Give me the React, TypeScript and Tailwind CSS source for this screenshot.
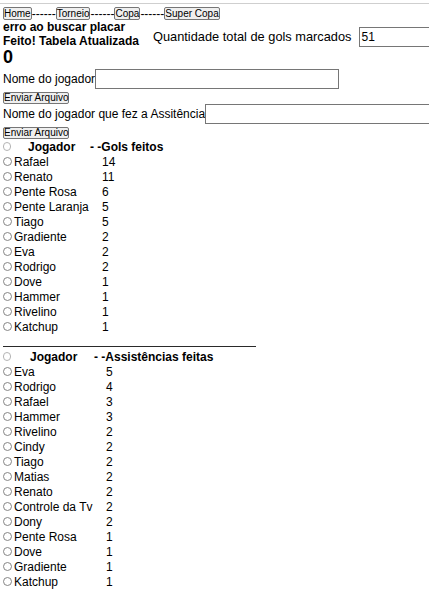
import React from 'react';

const golsFeitos: [string, number][] = [
  ['Rafael', 14],
  ['Renato', 11],
  ['Pente Rosa', 6],
  ['Pente Laranja', 5],
  ['Tiago', 5],
  ['Gradiente', 2],
  ['Eva', 2],
  ['Rodrigo', 2],
  ['Dove', 1],
  ['Hammer', 1],
  ['Rivelino', 1],
  ['Katchup', 1],
];

const assistencias: [string, number][] = [
  ['Eva', 5],
  ['Rodrigo', 4],
  ['Rafael', 3],
  ['Hammer', 3],
  ['Rivelino', 2],
  ['Cindy', 2],
  ['Tiago', 2],
  ['Matias', 2],
  ['Renato', 2],
  ['Controle da Tv', 2],
  ['Dony', 2],
  ['Pente Rosa', 1],
  ['Dove', 1],
  ['Gradiente', 1],
  ['Katchup', 1],
];

const Radio = ({ light }: { light?: boolean }) => (
  <span
    className={`block w-[9px] h-[9px] rounded-full border bg-white ${
      light ? 'border-[#b4b4b4]' : 'border-[#858585]'
    }`}
  />
);

const NavButton = ({ label }: { label: string }) => (
  <button className="h-[13px] px-0 text-[10px] leading-[11px] border border-[#767676] bg-[#efefef] rounded-[2px] text-black">
    {label}
  </button>
);

const SendButton = () => (
  <button className="block h-[12px] ml-[3px] px-0 text-[10px] leading-[10px] border border-[#767676] bg-[#efefef] rounded-[2px] text-black">
    Enviar Arquivo
  </button>
);

interface TableProps {
  title: string;
  rows: [string, number][];
  nameWidth: string;
  headerName: string;
}

const ScoreTable = ({ title, rows, nameWidth, headerName }: TableProps) => (
  <div>
    {/* header row */}
    <div className="flex items-center h-[15px] font-bold">
      <span className="pl-[3px] w-[11px] flex justify-start">
        <Radio light />
      </span>
      <span className={headerName}>Jogador</span>
      <span>- -{title}</span>
    </div>
    {rows.map(([name, n], i) => (
      <div key={i} className="flex items-center h-[15px]">
        <span className="pl-[3px] w-[14px]">
          <Radio />
        </span>
        <span className={nameWidth}>{name}</span>
        <span>{n}</span>
      </div>
    ))}
  </div>
);

export default function App() {
  return (
    <div className="w-full overflow-hidden bg-white text-black text-[12px] leading-[14px] font-['Liberation_Sans',Arial,sans-serif]">
      {/* top rule */}
      <div className="pt-[3px]">
        <div className="h-px bg-[#cfcfcf]" />
      </div>

      {/* nav */}
      <div className="mt-[3px] pl-[3px] flex items-center h-[13px]">
        <NavButton label="Home" />
        <span>------</span>
        <NavButton label="Torneio" />
        <span>------</span>
        <NavButton label="Copa" />
        <span>------</span>
        <NavButton label="Super Copa" />
      </div>

      {/* status + total */}
      <div className="flex items-start">
        <div className="w-[153px] shrink-0 pl-[3px] font-bold">
          <div>erro ao buscar placar</div>
          <div>Feito! Tabela Atualizada</div>
        </div>
        <div className="mt-[7px] flex items-center h-[20px] gap-[8px] shrink-0">
          <span className="text-[12.8px]">Quantidade total de gols marcados</span>
          <input
            readOnly
            value="51"
            className="w-[160px] h-[20px] border border-[#767676] px-[1px] text-[12px] outline-none"
          />
        </div>
      </div>

      <div className="pl-[3px] font-bold text-[18px] leading-[18px]">0</div>

      {/* gol form */}
      <div className="mt-[3px] pl-[3px] flex items-center">
        <span className="shrink-0">Nome do jogador</span>
        <input className="w-[244px] h-[20px] shrink-0 border border-[#767676] outline-none" />
      </div>
      <div className="mt-[3px]">
        <SendButton />
      </div>

      {/* assist form */}
      <div className="pl-[3px] flex items-center">
        <span className="shrink-0">Nome do jogador que fez a Assitência</span>
        <input className="w-[245px] h-[20px] shrink-0 border border-[#767676] outline-none" />
      </div>
      <div className="mt-[3px]">
        <SendButton />
      </div>

      <ScoreTable
        title="Gols feitos"
        rows={golsFeitos}
        nameWidth="w-[88px] shrink-0"
        headerName="ml-[17px] w-[62px] shrink-0"
      />

      <div className="mt-[12px] ml-[3px] w-[253px] h-px bg-[#2a2a2a]" />

      <div className="mt-[2px]">
        <ScoreTable
          title="Assistências feitas"
          rows={assistencias}
          nameWidth="w-[92px] shrink-0"
          headerName="ml-[19px] w-[64px] shrink-0"
        />
      </div>
    </div>
  );
}
